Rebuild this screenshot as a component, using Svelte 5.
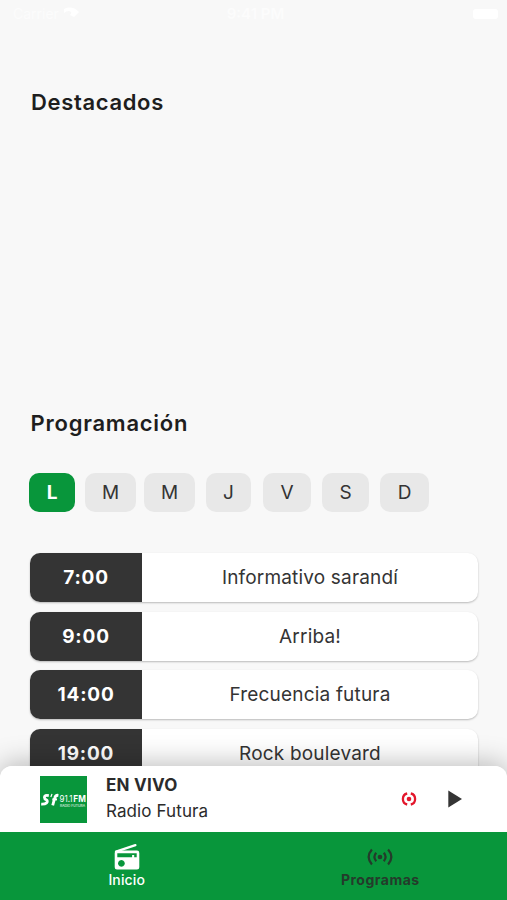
<script>
  let selectedDay = 0;
  let playing = false;

  const days = [
    { label: 'L', width: 46, gap: 10 },
    { label: 'M', width: 51, gap: 8 },
    { label: 'M', width: 51, gap: 11 },
    { label: 'J', width: 45, gap: 12 },
    { label: 'V', width: 48, gap: 11 },
    { label: 'S', width: 47, gap: 11 },
    { label: 'D', width: 49, gap: 0 }
  ];

  const programs = [
    { time: '7:00', name: 'Informativo sarandí' },
    { time: '9:00', name: 'Arriba!' },
    { time: '14:00', name: 'Frecuencia futura' },
    { time: '19:00', name: 'Rock boulevard' }
  ];
</script>

<div class="app">
  <header class="status-bar">
    <div class="carrier">
      <span>Carrier</span>
      <svg width="17" height="11" viewBox="0 0 17 11">
        <path d="M1 2 Q9 -2 16 5 L11 10 L7 8 Q10 5 6 4 Q3 4 1 6 Z" fill="#fff" />
      </svg>
    </div>
    <span class="clock">9:41 PM</span>
    <span class="battery"></span>
  </header>

  <main>
    <section class="featured">
      <h2>Destacados</h2>
    </section>

    <section class="schedule">
      <h2>Programación</h2>
      <div class="days">
        {#each days as day, i}
          <button
            class="day"
            class:active={selectedDay === i}
            style="width: {day.width}px; margin-right: {day.gap}px"
            on:click={() => (selectedDay = i)}
          >{day.label}</button>
        {/each}
      </div>

      <div class="programs">
        {#each programs as program}
          <div class="program">
            <div class="time">{program.time}</div>
            <div class="name">{program.name}</div>
          </div>
        {/each}
      </div>
    </section>
  </main>

  <div class="dock">
    <div class="player">
      <div class="logo">
        <svg width="47" height="47" viewBox="0 0 47 47">
          <g fill="none" stroke="#fff" stroke-linecap="butt">
            <path d="M8.8 19.6 Q4.4 18.8 4.4 21.3 Q4.4 23 6.2 23.8 Q8.2 25 6.6 26.9 Q5 28.3 1.2 28.1" stroke-width="2.8" />
            <path d="M10.8 21 L12 18" stroke-width="1.2" />
            <path d="M18.4 19.3 Q15.4 19 14.7 22 L12.7 29.3" stroke-width="2.8" />
            <path d="M12.3 23.4 H17" stroke-width="2" />
          </g>
          <text class="logo-number" x="19.5" y="25.5" textLength="13" lengthAdjust="spacingAndGlyphs">91.1</text>
          <text class="logo-fm" x="33.3" y="25.5" textLength="12.5" lengthAdjust="spacingAndGlyphs">FM</text>
          <text class="logo-name" x="20" y="30.6" textLength="25" lengthAdjust="spacingAndGlyphs">RADIO FUTURA</text>
        </svg>
      </div>
      <div class="track">
        <span class="live">EN VIVO</span>
        <span class="station">Radio Futura</span>
      </div>
      <svg class="live-icon" width="16" height="14" viewBox="0 0 16 14">
        <circle cx="8" cy="7" r="2.3" fill="#e3172c" />
        <g fill="none" stroke="#e3172c" stroke-width="2.3">
          <path d="M6.2 1.5 Q1.9 2.4 1.9 7 Q1.9 11.6 6.2 12.5" />
          <path d="M9.8 1.5 Q14.1 2.4 14.1 7 Q14.1 11.6 9.8 12.5" />
        </g>
      </svg>
      <button class="play" aria-label="Reproducir" on:click={() => (playing = !playing)}>
        <svg width="15" height="18" viewBox="0 0 15 18">
          <path d="M0.3 0.5 L14 9 L0.3 17.5 Z" fill="#343434" />
        </svg>
      </button>
    </div>

    <nav>
      <button class="tab current">
        <svg width="28" height="28" viewBox="0 0 28 28">
          <path d="M3 8.6 L22.4 2.2" stroke="#fff" stroke-width="2.3" stroke-linecap="round" />
          <path
            fill="#fff"
            fill-rule="evenodd"
            d="M4 7.6 H24 Q26.3 7.6 26.3 9.9 V24.2 Q26.3 26.5 24 26.5 H4 Q1.7 26.5 1.7 24.2 V9.9 Q1.7 7.6 4 7.6 Z
              M4.3 10.3 V14.3 H19.1 V12.1 H21.2 V14.3 H23.7 V10.3 Z
              M8.4 17 a3.4 3.4 0 1 0 0.01 0 Z"
          />
        </svg>
        <span>Inicio</span>
      </button>
      <button class="tab">
        <svg width="28" height="28" viewBox="0 0 28 28">
          <circle cx="14" cy="14" r="2.3" fill="#243b2b" />
          <g fill="none" stroke="#243b2b" stroke-width="2.2">
            <path d="M10.2 9.8 Q6.6 14 10.2 18.2" />
            <path d="M17.8 9.8 Q21.4 14 17.8 18.2" />
            <path d="M5.9 6.6 Q-0.6 14 5.9 21.4" />
            <path d="M22.1 6.6 Q28.6 14 22.1 21.4" />
          </g>
        </svg>
        <span>Programas</span>
      </button>
    </nav>
  </div>
</div>

<style>
  :global(body) {
    background: #f8f8f8;
  }

  .app {
    position: relative;
    width: 507px;
    height: 900px;
    overflow: hidden;
    background: #f8f8f8;
    color: #1e1e1e;
    font-family: Inter, sans-serif;
  }

  button {
    padding: 0;
    border: none;
    background: none;
    color: inherit;
    font-family: inherit;
    cursor: pointer;
  }

  svg {
    display: block;
  }

  .status-bar {
    display: grid;
    grid-template-columns: 1fr auto 1fr;
    align-items: center;
    height: 27px;
    padding: 0 9px 0 13px;
    color: #fcfcfc;
    font-size: 14px;
  }

  .carrier {
    display: flex;
    align-items: center;
    gap: 4px;
  }

  .carrier svg {
    margin-top: -3px;
  }

  .clock {
    font-size: 15px;
    font-weight: 600;
  }

  .battery {
    justify-self: end;
    width: 25px;
    height: 10px;
    border-radius: 3px;
    background: #fff;
  }

  h2 {
    margin: 0;
    font-size: 22px;
    font-weight: 600;
    line-height: 28px;
    letter-spacing: 0.65px;
  }

  .featured {
    height: 321px;
    padding: 61px 31px 0;
    box-sizing: border-box;
  }

  .schedule {
    padding: 61px 29px 0 30px;
  }

  .schedule h2 {
    padding-left: 0.6px;
    letter-spacing: 0.75px;
  }

  .days {
    display: flex;
    margin: 35.5px 0 0 -1px;
  }

  .day {
    flex: none;
    height: 39px;
    border-radius: 10px;
    background: #e8e8e8;
    color: #343434;
    font-size: 19px;
    line-height: 39px;
  }

  .day.active {
    background: #08963b;
    color: #fff;
    font-weight: 700;
  }

  .programs {
    display: flex;
    flex-direction: column;
    gap: 9.6px;
    margin-top: 41.5px;
  }

  .program {
    display: flex;
    height: 49px;
    border-radius: 10px;
    background: #fff;
    box-shadow: 0 1px 2px rgba(0, 0, 0, 0.25);
    overflow: hidden;
    line-height: 50px;
    text-align: center;
  }

  .time {
    width: 112px;
    background: #343434;
    color: #fff;
    font-size: 19px;
    font-weight: 700;
    letter-spacing: 0.8px;
  }

  .name {
    flex: 1;
    color: #343434;
    font-size: 19px;
    letter-spacing: 0.18px;
  }

  .dock {
    position: absolute;
    right: 0;
    bottom: 0;
    left: 0;
    border-radius: 12px 12px 0 0;
    box-shadow: 0 -2px 28px rgba(0, 0, 0, 0.28);
  }

  .player {
    display: flex;
    align-items: center;
    height: 66px;
    padding: 0 44px 0 40px;
    border-radius: 12px 12px 0 0;
    background: #fff;
  }

  .logo {
    width: 47px;
    height: 47px;
    background: #08963b;
  }

  .logo text {
    fill: #fff;
  }

  .logo-number {
    font-size: 9px;
  }

  .logo-fm {
    font-size: 9px;
    font-weight: 700;
  }

  .logo-name {
    font-size: 2.8px;
  }

  .track {
    display: flex;
    flex: 1;
    flex-direction: column;
    margin: -2px 0 0 19px;
    color: #2b2b2b;
    line-height: 26px;
  }

  .live {
    font-size: 17px;
    font-weight: 700;
    letter-spacing: 0.25px;
  }

  .station {
    font-size: 17px;
    letter-spacing: 0.1px;
  }

  .live-icon {
    margin-right: 31px;
  }

  nav {
    display: flex;
    height: 68px;
    background: #08963b;
  }

  .tab {
    display: flex;
    flex: 1;
    flex-direction: column;
    align-items: center;
    padding-top: 11px;
    color: #243b2b;
    font-size: 14px;
    font-weight: 700;
    line-height: 18px;
    letter-spacing: 0.5px;
  }

  .tab.current {
    color: #fff;
    font-weight: 500;
    letter-spacing: 0.15px;
  }
</style>
